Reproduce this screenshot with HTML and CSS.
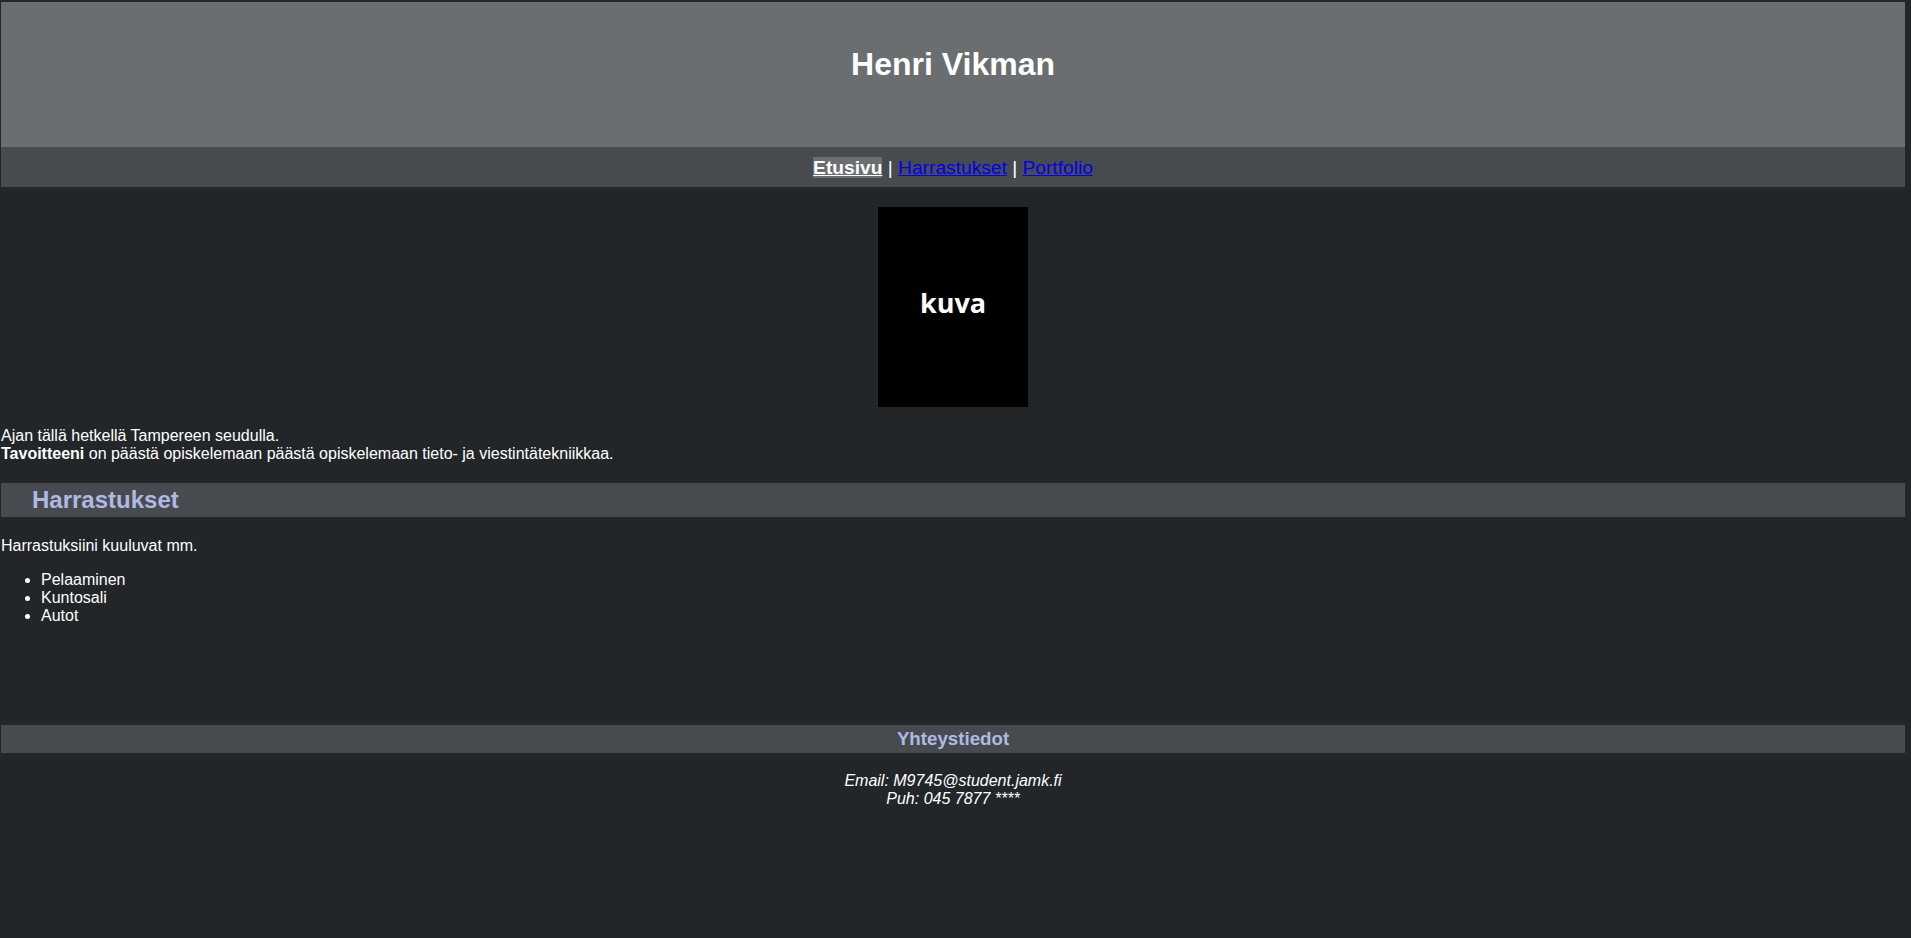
FILE: index.html
```html
<!DOCTYPE html>
<html lang="fi">
<head>
<meta charset="utf-8">
<title>Henri Vikman</title>
<link rel="stylesheet" href="styles.css">
</head>
<body>
<div class="page">
  <header class="site-header">
    <h1 class="site-title">Henri Vikman</h1>
  </header>
  <nav class="site-nav">
    <a class="nav-link active" href="#">Etusivu</a> | <a class="nav-link" href="#">Harrastukset</a> | <a class="nav-link" href="#">Portfolio</a>
  </nav>
  <main class="content">
    <div class="photo-row">
      <div class="photo">kuva</div>
    </div>
    <p class="intro">Ajan tällä hetkellä Tampereen seudulla.<br><strong>Tavoitteeni</strong> on päästä opiskelemaan päästä opiskelemaan tieto- ja viestintätekniikkaa.</p>
    <h2 class="section-title">Harrastukset</h2>
    <p class="text">Harrastuksiini kuuluvat mm.</p>
    <ul class="hobbies">
      <li>Pelaaminen</li>
      <li>Kuntosali</li>
      <li>Autot</li>
    </ul>
  </main>
  <footer class="site-footer">
    <h3 class="footer-title">Yhteystiedot</h3>
    <p class="contact">Email: M9745@student.jamk.fi<br>Puh: 045 7877 ****</p>
  </footer>
</div>
</body>
</html>
```
FILE: styles.css
```css
html, body {
  margin: 0;
  padding: 0;
}

body {
  background: #222629;
  color: #ffffff;
  font-family: "Liberation Sans", Arial, sans-serif;
  font-size: 16px;
}

.page {
  margin: 2px 6px 0 1px;
}

.site-header {
  background: #6b6e71;
  height: 145px;
  box-sizing: border-box;
  padding-top: 44px;
  text-align: center;
}

.site-title {
  margin: 0;
  font-size: 32px;
  font-weight: bold;
  color: #ffffff;
}

.site-nav {
  background: #474b4f;
  height: 40px;
  box-sizing: border-box;
  padding-top: 10px;
  text-align: center;
  font-size: 19.2px;
  color: #ffffff;
}

.nav-link {
  color: #0000ee;
}

.nav-link.active {
  color: #ffffff;
  font-weight: bold;
  background: #6b6e71;
}

.content {
  padding-bottom: 84px;
}

.photo-row {
  display: flex;
  justify-content: center;
  padding-top: 20px;
}

.photo {
  width: 150px;
  height: 200px;
  background: #000000;
  color: #ffffff;
  display: flex;
  align-items: center;
  justify-content: center;
  font-family: "Open Sans", sans-serif;
  font-weight: bold;
  font-size: 27px;
  padding-bottom: 9px;
  box-sizing: border-box;
}

.intro {
  margin: 20px 0 0 0;
  line-height: 18px;
}

.section-title {
  background: #474b4f;
  color: #b0b9e2;
  font-size: 24px;
  margin: 20px 0 20px 0;
  padding: 3px 0 3px 31px;
  line-height: 28px;
}

.text {
  margin: 0 0 16px 0;
}

.hobbies {
  margin: 0 0 16px 0;
  padding-left: 40px;
}

.site-footer {
  text-align: center;
}

.footer-title {
  background: #474b4f;
  color: #b0b9e2;
  font-size: 18.72px;
  margin: 0;
  padding: 3px 0;
  line-height: 22px;
}

.contact {
  margin: 19px 0 0 0;
  font-style: italic;
  line-height: 18px;
}
```
